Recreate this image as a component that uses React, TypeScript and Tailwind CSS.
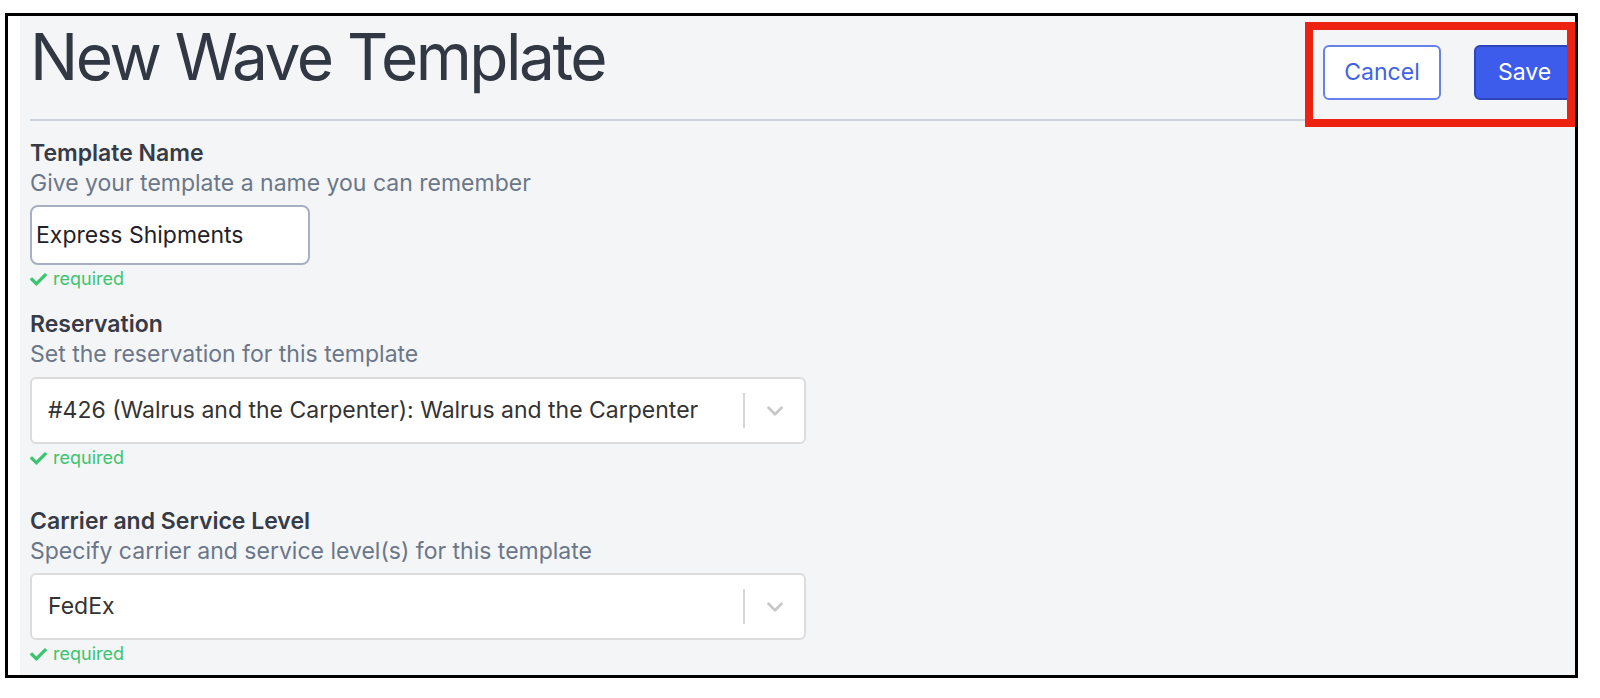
import { ChevronDown } from 'lucide-react';
import { FaCheck } from 'react-icons/fa';

const Required = ({ className = '' }: { className?: string }) => (
  <div className={`flex items-center gap-[6px] h-[24px] text-[18px] leading-[24px] text-[#3cc46f] ${className}`}>
    <FaCheck className="w-[17px] h-[17px]" />
    <span>required</span>
  </div>
);

const SelectBox = ({ value }: { value: string }) => (
  <div className="w-[776px] h-[67px] bg-white border-2 border-[#dcdcdc] rounded-[6px] flex items-center">
    <div className="flex-1 pl-[16px] text-[23px] text-[#333333] truncate">{value}</div>
    <div className="w-[2px] h-[35px] bg-[#d6d6d6]" />
    <div className="w-[59px] flex items-center justify-center">
      <ChevronDown className="w-[26px] h-[26px] text-[#c8c8c8]" strokeWidth={2.5} />
    </div>
  </div>
);

const Label = ({ title, hint }: { title: string; hint: string }) => (
  <div>
    <div className="text-[23px] leading-[30px] font-semibold text-[#363b47]">{title}</div>
    <div className="text-[23px] leading-[30px] text-[#6b7789]">{hint}</div>
  </div>
);

export default function App() {
  return (
    <div className="w-[1600px] h-[698px] bg-white pt-[13px] pl-[5px] font-['Inter',sans-serif]">
      <div className="relative w-[1573px] h-[665px] border-[3px] border-black bg-white pl-[12px]">
        <div className="h-full bg-[#f4f5f7] pl-[10px]">
          <div className="h-[105px] border-b-2 border-[#cdd4de] flex justify-between items-start">
            <h1 className="mt-[9px] text-[64px] leading-none font-normal text-[#323744] tracking-[-2.5px]">
              New Wave Template
            </h1>
            <div className="mt-[29px] flex gap-[33px]">
              <button className="w-[118px] h-[55px] bg-white border-2 border-[#6582ea] rounded-[6px] text-[23px] text-[#3f63e6]">
                Cancel
              </button>
              <button className="w-[101px] h-[55px] bg-[#3d5ceb] border-2 border-[#2c45b8] rounded-[6px] text-[23px] text-white">
                Save
              </button>
            </div>
          </div>

          <div className="mt-[17px]">
            <Label title="Template Name" hint="Give your template a name you can remember" />
            <div className="mt-[7px] w-[280px] h-[60px] bg-white border-2 border-[#a7b0c3] rounded-[8px] flex items-center pl-[4px] text-[23px] text-[#1f2329]">
              Express Shipments
            </div>
            <Required className="mt-[2px]" />
          </div>

          <div className="mt-[18px]">
            <Label title="Reservation" hint="Set the reservation for this template" />
            <div className="mt-[8px]">
              <SelectBox value="#426 (Walrus and the Carpenter): Walrus and the Carpenter" />
            </div>
            <Required className="mt-[2px]" />
          </div>

          <div className="mt-[36px]">
            <Label title="Carrier and Service Level" hint="Specify carrier and service level(s) for this template" />
            <div className="mt-[7px]">
              <SelectBox value="FedEx" />
            </div>
            <Required className="mt-[2px]" />
          </div>
        </div>

        <div className="absolute left-[1297px] top-[6px] w-[270px] h-[105px] border-8 border-[#ee2211]" />
      </div>
    </div>
  );
}
